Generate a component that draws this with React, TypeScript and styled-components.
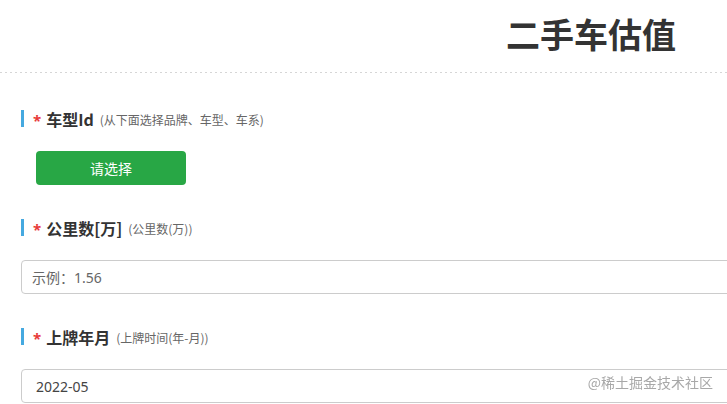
import React from "react";
import styled, { createGlobalStyle } from "styled-components";

const GlobalStyle = createGlobalStyle`
  html, body {
    margin: 0;
    padding: 0;
    background: #fff;
    overflow: hidden;
  }
  body {
    font-family: "Noto Sans", "Noto Sans CJK SC", sans-serif;
    color: #333;
  }
`;

const Page = styled.div`
  width: 1182px;
  display: flex;
  flex-direction: column;
`;

const Header = styled.header`
  display: flex;
  justify-content: center;
  padding: 14px 0 18px;
`;

const Divider = styled.div`
  height: 1px;
  background-image: repeating-linear-gradient(
    to right,
    #d6d6d6 0 2px,
    transparent 2px 5px
  );
`;

const Title = styled.h1`
  margin: 0;
  font-family: "Noto Sans CJK SC", sans-serif;
  font-size: 34px;
  line-height: 40px;
  font-weight: 700;
  color: #333;
`;

const Form = styled.div`
  display: flex;
  flex-direction: column;
  padding: 37px 0 0 21px;
`;

const Section = styled.section`
  display: flex;
  flex-direction: column;
  gap: 24px;
  margin-bottom: 34px;
`;

const Label = styled.div`
  display: flex;
  align-items: center;
  height: 17px;
`;

const Bar = styled.span`
  width: 3px;
  height: 17px;
  background: #45a9e0;
  margin-right: 9px;
`;

const Star = styled.span`
  color: #e83a3a;
  font-size: 15px;
  font-weight: 700;
  margin-right: 5px;
  line-height: 17px;
  padding-top: 3px;
`;

const LabelText = styled.span`
  font-family: "Noto Sans CJK SC", sans-serif;
  font-size: 16px;
  font-weight: 700;
  color: #333;
`;

const Hint = styled.span`
  font-family: "Noto Sans CJK SC", sans-serif;
  font-size: 12px;
  color: #666;
  margin-left: 6px;
  padding-top: 2px;
`;

const PickButton = styled.button`
  width: 150px;
  height: 34px;
  margin-left: 15px;
  border: none;
  border-radius: 4px;
  background: #28a745;
  color: #fff;
  font-family: "Noto Sans CJK SC", sans-serif;
  font-size: 14px;
  cursor: pointer;
`;

const Field = styled.input<{ $pad: number }>`
  box-sizing: border-box;
  width: 1150px;
  height: 34px;
  border: 1px solid #ccc;
  border-radius: 4px;
  padding: 0 0 0 ${(p) => p.$pad}px;
  font-family: "Noto Sans", "Noto Sans CJK SC", sans-serif;
  font-size: 14px;
  color: #444;
  outline: none;

  &::placeholder {
    color: #666;
  }
`;

const Watermark = styled.div`
  position: fixed;
  right: 14px;
  bottom: 12px;
  font-family: "Noto Sans CJK SC", sans-serif;
  font-size: 14px;
  color: #a8a8a8;
  pointer-events: none;
`;

const FieldLabel = ({ text, hint }: { text: string; hint: string }) => (
  <Label>
    <Bar />
    <Star>*</Star>
    <LabelText>{text}</LabelText>
    <Hint>{hint}</Hint>
  </Label>
);

export default function App() {
  return (
    <Page>
      <GlobalStyle />
      <Header>
        <Title>二手车估值</Title>
      </Header>
      <Divider />
      <Form>
        <Section>
          <FieldLabel text="车型Id" hint="(从下面选择品牌、车型、车系)" />
          <div>
            <PickButton>请选择</PickButton>
          </div>
        </Section>
        <Section>
          <FieldLabel text="公里数[万]" hint="(公里数(万))" />
          <Field $pad={10} placeholder="示例：1.56" />
        </Section>
        <Section>
          <FieldLabel text="上牌年月" hint="(上牌时间(年-月))" />
          <Field $pad={14} defaultValue="2022-05" />
        </Section>
      </Form>
      <Watermark>@稀土掘金技术社区</Watermark>
    </Page>
  );
}
